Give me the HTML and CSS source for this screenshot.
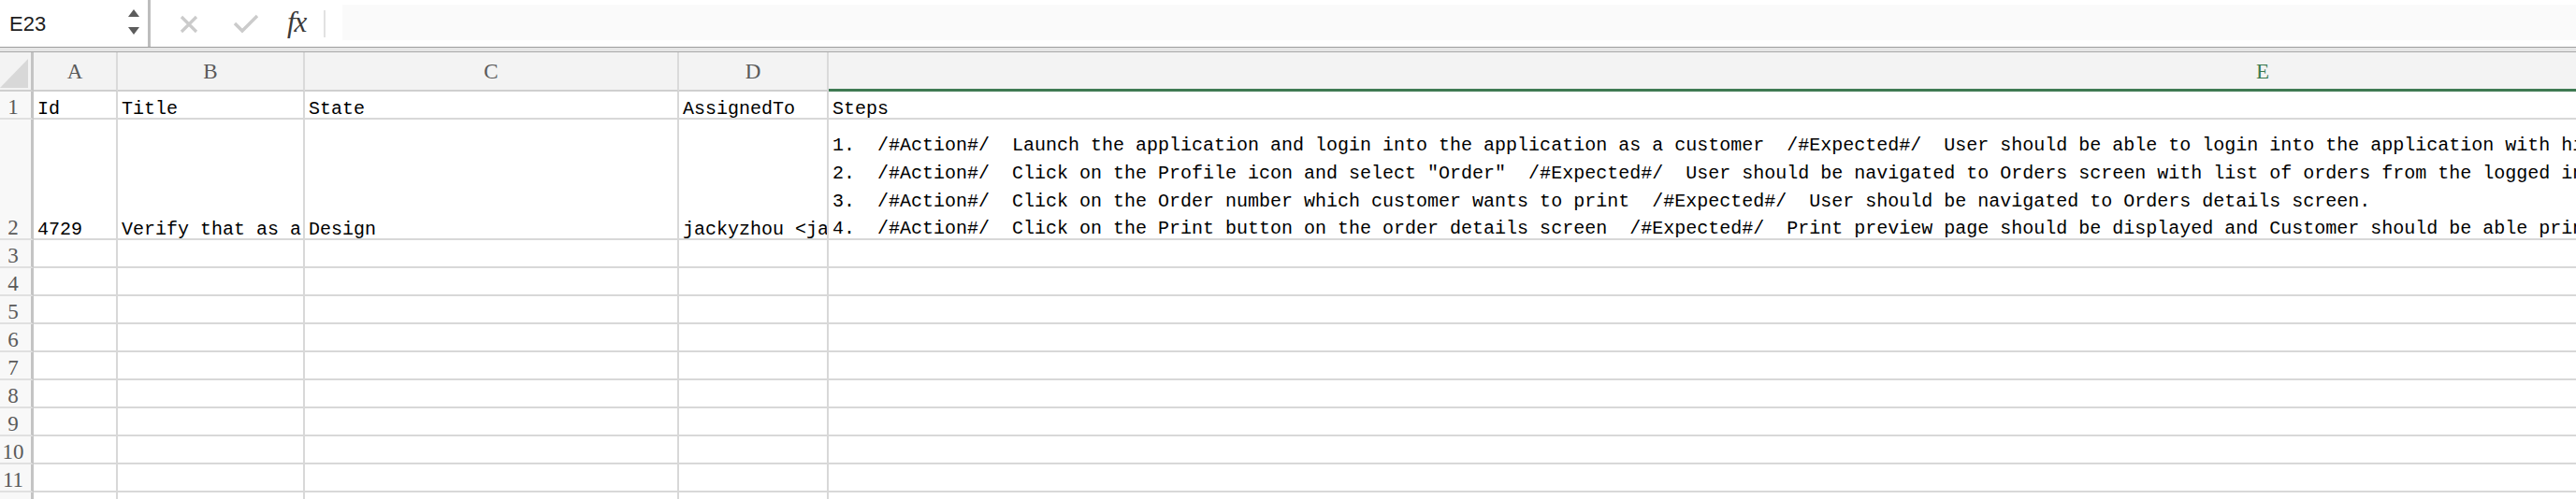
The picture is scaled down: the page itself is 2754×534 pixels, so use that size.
FILE: index.html
```html
<!DOCTYPE html>
<html>
<head>
<meta charset="utf-8">
<link rel="stylesheet" href="styles.css">
</head>
<body>
<div class="app">
  <div class="formula-bar">
    <div class="name-box">
      <span class="name-text">E23</span>
      <span class="spinner">
        <svg width="14" height="30" viewBox="0 0 14 30"><polygon points="7,1 13,9 1,9" fill="#5c5c5c"/><polygon points="1,20 13,20 7,28" fill="#5c5c5c"/></svg>
      </span>
    </div>
    <div class="vdivider"></div>
    <div class="fb-icons">
      <svg class="ic-x" width="22" height="20" viewBox="0 0 22 20"><path d="M3 2 L19 18 M19 2 L3 18" stroke="#cbcbcb" stroke-width="3.2" fill="none"/></svg>
      <svg class="ic-check" width="28" height="22" viewBox="0 0 28 22"><path d="M2 11 L10 19 L26 3" stroke="#cbcbcb" stroke-width="3.4" fill="none"/></svg>
      <span class="fx">fx</span>
      <span class="small-sep"></span>
    </div>
    <div class="fb-input"></div>
  </div>
  <div class="fb-band"></div>

  <div class="sheet">
    <div class="corner"><svg width="30" height="31" viewBox="0 0 30 31"><polygon points="30,0 30,31 0,31" fill="#d8d8d8"/></svg></div>
    <div class="colhead">A</div>
    <div class="colhead">B</div>
    <div class="colhead">C</div>
    <div class="colhead">D</div>
    <div class="colhead sel">E</div>

    <div class="rowhead">1</div>
    <div class="cell">Id</div>
    <div class="cell">Title</div>
    <div class="cell">State</div>
    <div class="cell">AssignedTo</div>
    <div class="cell">Steps</div>

    <div class="rowhead">2</div>
    <div class="cell">4729</div>
    <div class="cell">Verify that as a customer I can print the order details</div>
    <div class="cell">Design</div>
    <div class="cell">jackyzhou &lt;jackyzhou@example.com&gt;</div>
    <div class="cell multi">
      <div class="ln">1.  /#Action#/  Launch the application and login into the application as a customer  /#Expected#/  User should be able to login into the application with his/her credentials.</div>
      <div class="ln">2.  /#Action#/  Click on the Profile icon and select "Order"  /#Expected#/  User should be navigated to Orders screen with list of orders from the logged in user.</div>
      <div class="ln">3.  /#Action#/  Click on the Order number which customer wants to print  /#Expected#/  User should be navigated to Orders details screen.</div>
      <div class="ln">4.  /#Action#/  Click on the Print button on the order details screen  /#Expected#/  Print preview page should be displayed and Customer should be able print the order details.</div>
    </div>

    <div class="rowhead">3</div><div class="cell"></div><div class="cell"></div><div class="cell"></div><div class="cell"></div><div class="cell"></div>
    <div class="rowhead">4</div><div class="cell"></div><div class="cell"></div><div class="cell"></div><div class="cell"></div><div class="cell"></div>
    <div class="rowhead">5</div><div class="cell"></div><div class="cell"></div><div class="cell"></div><div class="cell"></div><div class="cell"></div>
    <div class="rowhead">6</div><div class="cell"></div><div class="cell"></div><div class="cell"></div><div class="cell"></div><div class="cell"></div>
    <div class="rowhead">7</div><div class="cell"></div><div class="cell"></div><div class="cell"></div><div class="cell"></div><div class="cell"></div>
    <div class="rowhead">8</div><div class="cell"></div><div class="cell"></div><div class="cell"></div><div class="cell"></div><div class="cell"></div>
    <div class="rowhead">9</div><div class="cell"></div><div class="cell"></div><div class="cell"></div><div class="cell"></div><div class="cell"></div>
    <div class="rowhead">10</div><div class="cell"></div><div class="cell"></div><div class="cell"></div><div class="cell"></div><div class="cell"></div>
    <div class="rowhead">11</div><div class="cell"></div><div class="cell"></div><div class="cell"></div><div class="cell"></div><div class="cell"></div>
    <div class="rowhead">12</div><div class="cell"></div><div class="cell"></div><div class="cell"></div><div class="cell"></div><div class="cell"></div>
  </div>
</div>
</body>
</html>
```

FILE: styles.css
```css
* { box-sizing: border-box; }
html, body {
  margin: 0;
  padding: 0;
  background: #ffffff;
  width: 2754px;
  height: 534px;
  overflow: hidden;
}
.app {
  width: 2754px;
  height: 534px;
  overflow: hidden;
}

/* formula bar */
.formula-bar {
  height: 51px;
  display: flex;
  align-items: stretch;
  background: #ffffff;
  border-bottom: 1px solid #9e9e9e;
}
.name-box {
  width: 158px;
  display: flex;
  align-items: center;
  padding-left: 10px;
  padding-right: 8px;
  justify-content: space-between;
}
.name-text {
  font-family: "Liberation Sans", Arial, sans-serif;
  font-size: 22px;
  color: #1e1e1e;
  padding-top: 1px;
}
.spinner {
  display: flex;
  align-items: center;
  margin-top: -2px;
}
.vdivider {
  width: 3px;
  background: #bdbdbd;
}
.fb-icons {
  width: 205px;
  display: flex;
  align-items: center;
  padding-left: 30px;
}
.ic-x { margin-top: 1px; }
.ic-check { margin-left: 36px; }
.fx {
  margin-left: 30px;
  font-family: "Liberation Serif", "Times New Roman", serif;
  font-style: italic;
  font-size: 31px;
  color: #3a3a3a;
  letter-spacing: -1px;
  margin-top: -3px;
}
.small-sep {
  width: 2px;
  height: 29px;
  background: #e2e2e2;
  margin-left: 19px;
}
.fb-input {
  flex: 1;
  margin: 5px 0 7px 0;
  background: #fafafa;
}
.fb-band {
  height: 4px;
  background: #e6e6e6;
  border-bottom: 1px solid #a8a8a8;
  box-sizing: content-box;
}

/* sheet grid */
.sheet {
  display: grid;
  grid-template-columns: 36px 90px 200px 400px 160px 3066px;
  grid-template-rows: 42px 30px 129px repeat(10, 30px);
  background: #ffffff;
}
.corner {
  background: #f3f3f3;
  border-right: 3px solid #c4c4c4;
  border-bottom: 2px solid #cfcfcf;
  display: flex;
  align-items: flex-end;
  justify-content: flex-start;
  padding-bottom: 2px;
}
.corner svg { display: block; }
.colhead {
  background: #f3f3f3;
  border-right: 2px solid #dadada;
  border-bottom: 2px solid #cfcfcf;
  display: flex;
  align-items: center;
  justify-content: center;
  font-family: "Liberation Serif", "Times New Roman", serif;
  font-size: 23px;
  color: #5a5a5a;
  padding-top: 2px;
}
.colhead.sel {
  color: #3c7a50;
  border-bottom: 3px solid #3f7a52;
  border-right: none;
}
.rowhead {
  background: #f8f8f8;
  border-right: 3px solid #c4c4c4;
  border-bottom: 2px solid #e0e0e0;
  display: flex;
  align-items: flex-end;
  justify-content: center;
  font-family: "Liberation Serif", "Times New Roman", serif;
  font-size: 23px;
  line-height: 20px;
  color: #5a5a5a;
  padding-right: 5px;
  padding-bottom: 1px;
}
.cell {
  border-right: 2px solid #d8d8d8;
  border-bottom: 2px solid #d8d8d8;
  display: flex;
  flex-direction: column;
  justify-content: flex-end;
  padding: 0 0 0 4px;
  overflow: hidden;
  white-space: pre;
  font-family: "Liberation Mono", "Courier New", monospace;
  font-size: 20px;
  line-height: 18px;
  color: #000000;
}
.cell.multi .ln {
  line-height: 29.7px;
  white-space: pre;
}
.cell.multi .ln:last-child {
  margin-bottom: -5px;
}
```
